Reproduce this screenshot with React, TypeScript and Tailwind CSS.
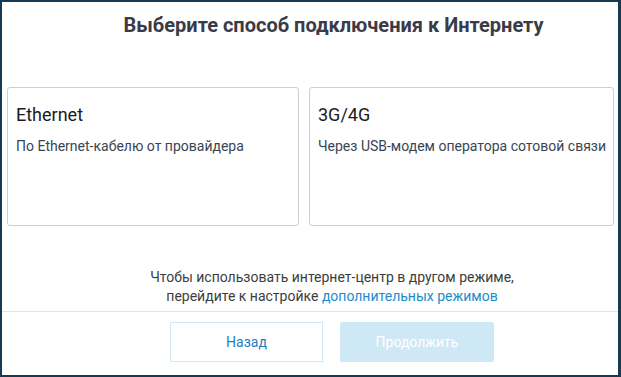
import React from 'react'

const options = [
    { title: "Ethernet", description: "По Ethernet-кабелю от провайдера", width: "w-[292px]" },
    { title: "3G/4G", description: "Через USB-модем оператора сотовой связи", width: "w-[305px]" },
]

const OptionCard = ({ title, description, width }: { title: string; description: string; width: string }) => (
    <div className={`${width} h-[139px] rounded-[3px] border border-[#cfcfcf] bg-white pl-[8px] pt-[16px]`}>
        <div className="text-[18px] leading-[22px] text-[#1b1b1b]">{title}</div>
        <div className="mt-[10px] text-[14px] leading-[20px] text-[#3a4554]">{description}</div>
    </div>
)

export default function App() {
    return (
        <div className="w-[621px] h-[377px] bg-[#163a52] pl-[2px] pt-[2px] pr-[3px] pb-[2px] font-['Roboto',sans-serif]">
            <div className="h-full bg-white flex flex-col">
                {/* Header */}
                <div className="pl-[47px] pt-[10px] flex justify-center">
                    <h1 className="text-[20px] leading-[26px] font-bold text-[#3b3b48]">Выберите способ подключения к Интернету</h1>
                </div>

                {/* Options */}
                <div className="mt-[49px] pl-[5px] flex gap-[10px]">
                    {options.map((opt) => (
                        <OptionCard key={opt.title} {...opt} />
                    ))}
                </div>

                {/* Hint */}
                <div className="mt-[42px] pl-[44px] text-center text-[14px] leading-[19px] text-[#3d3d3d]">
                    <p>Чтобы использовать интернет-центр в другом режиме,</p>
                    <p>
                        перейдите к настройке <a className="text-[#1a8ccc]">дополнительных режимов</a>
                    </p>
                </div>

                {/* Footer */}
                <div className="mt-[5px] border-t border-[#d6e6f0] pt-[10px] pl-[44px] flex justify-center gap-[17px]">
                    <button className="w-[153px] h-[40px] border border-[#d2e8f4] bg-white text-[14px] text-[#1f80c0]">Назад</button>
                    <button className="w-[154px] h-[40px] rounded-[2px] bg-[#cfe8f5] text-[14px] text-white">Продолжить</button>
                </div>
            </div>
        </div>
    )
}
